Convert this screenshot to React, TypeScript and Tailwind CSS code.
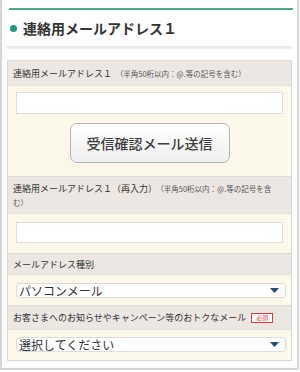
import React from 'react';

const jp = { fontFamily: '"Noto Sans CJK JP", "Noto Sans", sans-serif' };

function Label({ children }: { children: React.ReactNode }) {
  return (
    <div className="bg-[#ece7e3] border-t border-[#e0dbd5] pl-[5px] pr-[6px] text-[9px] leading-[15px] text-[#333]">
      {children}
    </div>
  );
}

function Note({ children }: { children: React.ReactNode }) {
  return <span className="text-[7.5px] text-[#555]">{children}</span>;
}

function SelectBox({ value }: { value: string }) {
  return (
    <div className="mx-[8px] h-[15px] w-[270px] rounded-[4px] border border-[#dcdcdc] bg-white flex items-center justify-between pl-[2px] pr-[6px]">
      <span className="text-[12px] leading-none text-[#333]">{value}</span>
      <svg width="9" height="5" viewBox="0 0 9 5">
        <path d="M0 0 H9 L4.5 5 Z" fill="#1d4c78" />
      </svg>
    </div>
  );
}

export default function App() {
  return (
    <div style={jp} className="w-[299px] h-[370px] bg-white border-x-2 border-b-2 border-[#d6d6d6] px-[5px] pt-[8px] overflow-hidden">
      {/* heading */}
      <div className="h-[2px] bg-[#43ad8c] ml-[2px] mr-[-1px]" />
      <div className="mt-[8px] h-[20px] flex items-center gap-[6px] pl-[3px]">
        <span className="w-[7px] h-[7px] rounded-full bg-[#1f9b7a]" />
        <span className="text-[14px] font-bold text-[#333]">連絡用メールアドレス１</span>
      </div>
      <div className="mt-[8px] h-[3px] bg-gradient-to-b from-[#e2e2e2] to-[#f5f5f5]" />

      {/* form */}
      <div className="mt-[11px] border border-[#ddd8d2] border-t-0">
        <Label>
          <div className="h-[24px] flex items-center whitespace-nowrap">
            連絡用メールアドレス１<Note>　（半角50桁以内：@.等の記号を含む）</Note>
          </div>
        </Label>
        <div className="bg-[#fbf8e9] border-t border-[#e6e1da] pt-[6px] pb-[13px] flex flex-col">
          <div className="mx-[8px] h-[22px] bg-white border border-[#dedede]" />
          <button className="mt-[9px] self-center w-[160px] h-[40px] rounded-[7px] border border-[#b3b3b3] bg-gradient-to-b from-white to-[#efefef] text-[14px] font-medium text-[#3d3d3d]">
            受信確認メール送信
          </button>
        </div>
        <Label>
          <div className="pt-[4px] pb-[3px]">
            <div className="whitespace-nowrap">
              連絡用メールアドレス１（再入力）<Note>　（半角50桁以内：@.等の記号を含</Note>
            </div>
            <div className="leading-[14px]">
              <Note>む）</Note>
            </div>
          </div>
        </Label>
        <div className="bg-[#fbf8e9] border-t border-[#e6e1da] pt-[8px] pb-[10px]">
          <div className="mx-[8px] h-[21px] bg-white border border-[#dedede]" />
        </div>
        <Label>
          <div className="h-[20px] flex items-center">メールアドレス種別</div>
        </Label>
        <div className="bg-[#fbf8e9] border-t border-[#e6e1da] pt-[8px] pb-[7px]">
          <SelectBox value="パソコンメール" />
        </div>
        <Label>
          <div className="h-[23px] flex items-center whitespace-nowrap">
            お客さまへのお知らせやキャンペーン等のおトクなメール
            <span className="ml-[5px] inline-flex items-center justify-center w-[22px] h-[10px] border border-[#e03a3f] bg-white text-[6px] leading-none text-[#e03a3f]">
              必須
            </span>
          </div>
        </Label>
        <div className="bg-[#fbf8e9] border-t border-[#e6e1da] pt-[7px] pb-[8px]">
          <SelectBox value="選択してください" />
        </div>
      </div>
    </div>
  );
}
